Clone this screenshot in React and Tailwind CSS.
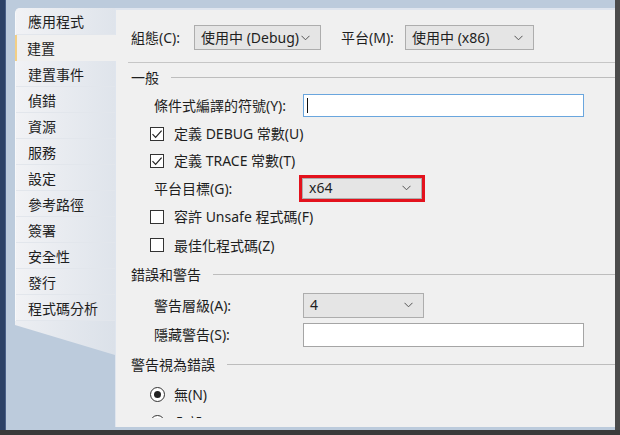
import React from 'react'

const FONT = { fontFamily: '"Noto Sans", "Noto Sans CJK TC", sans-serif' }

const tabs = ['應用程式', '建置', '建置事件', '偵錯', '資源', '服務', '設定', '參考路徑', '簽署', '安全性', '發行', '程式碼分析']

function Chevron() {
  return (
    <svg width="9" height="6" viewBox="0 0 9 6" className="shrink-0">
      <path d="M0.5 0.8 L4.5 4.8 L8.5 0.8" fill="none" stroke="#555" strokeWidth="1" />
    </svg>
  )
}

function Select({ value, className = '' }) {
  return (
    <div className={`flex items-center justify-between bg-[#e5e5e5] border border-[#adadad] pl-[6px] pr-[10px] ${className}`}>
      <span className="leading-none">{value}</span>
      <Chevron />
    </div>
  )
}

function Check({ checked }) {
  return (
    <div className="w-[14px] h-[14px] border border-[#333] bg-white flex items-center justify-center shrink-0">
      {checked && (
        <svg width="12" height="12" viewBox="0 0 12 12">
          <path d="M1.5 6.2 L4.6 9.3 L10.6 2.6" fill="none" stroke="#222" strokeWidth="1.2" />
        </svg>
      )}
    </div>
  )
}

function Radio({ checked }) {
  return (
    <div className="w-[15px] h-[15px] rounded-full border border-[#333] bg-white flex items-center justify-center shrink-0">
      {checked && <div className="w-[7px] h-[7px] rounded-full bg-[#222]" />}
    </div>
  )
}

function Header({ text, h }) {
  return (
    <div className={`flex items-center shrink-0 pl-[15px] ${h}`}>
      <span className="whitespace-nowrap">{text}</span>
      <div className="flex-1 h-px bg-[#bdbdbd] ml-[12px]" />
    </div>
  )
}

function CheckRow({ text, checked, h }) {
  return (
    <div className={`flex items-center shrink-0 pl-[34px] ${h}`}>
      <Check checked={checked} />
      <span className="ml-[10px] whitespace-nowrap">{text}</span>
    </div>
  )
}

function FieldRow({ label, h, children }) {
  return (
    <div className={`flex items-center shrink-0 pl-[38px] ${h}`}>
      <span className="w-[149px] whitespace-nowrap">{label}</span>
      {children}
    </div>
  )
}

export default function App() {
  return (
    <div className="w-[620px] h-[435px] flex flex-col bg-[#3d3d3d] text-[14px] text-[#1e1e1e] overflow-hidden" style={FONT}>
      <div className="flex h-[430px] shrink-0">
        {/* desktop strip */}
        <div className="w-[6px] bg-[#2c4166] border-r border-[#4a6088]" />

        {/* window */}
        <div className="w-[609px] bg-[#bccbdc] flex pl-[9px]">
          {/* tabs */}
          <div className="w-[100px] flex flex-col pt-[8px]">
            {tabs.map((t, i) =>
              t === '建置' ? (
                <div key={t} className="h-[26px] shrink-0 flex items-center pl-[10px] bg-[#f0f0f0] border-l-2 border-[#f2cf86] relative z-10 -mr-px">
                  {t}
                </div>
              ) : (
                <div
                  key={t}
                  className={`${i === 0 ? 'h-[27px] rounded-tl-[5px]' : 'h-[26px]'} shrink-0 flex items-center pl-[12px] bg-gradient-to-r from-[#f1f2f5] to-[#dfe4eb] border-l border-[#f7f8fa] shadow-[inset_0_-1px_0_#e2e6ec]`}
                >
                  {t}
                </div>
              )
            )}
            <div className="h-[34px] shrink-0 bg-gradient-to-r from-[#eceef2] to-[#dbe1e9] [clip-path:polygon(0_0,100%_0,100%_100%,0_12%)]" />
          </div>

          {/* property page */}
          <div className="w-[500px] mt-[8px] h-[419px] border-t-2 border-[#dfe5ee] bg-[#f0f0f0] border-l border-[#d3dae4] flex flex-col">
            {/* configuration bar */}
            <div className="h-[52px] shrink-0 flex items-start pt-[15px] pl-[15px]">
              <div className="h-[25px] flex items-center w-[63px] whitespace-nowrap">組態(C):</div>
              <Select value="使用中 (Debug)" className="w-[127px] h-[25px]" />
              <div className="h-[25px] flex items-center w-[64px] ml-[20px] whitespace-nowrap">平台(M):</div>
              <Select value="使用中 (x86)" className="w-[129px] h-[25px]" />
            </div>
            <div className="ml-[12px] h-px shrink-0 bg-[#c6c6c6]" />

            {/* scrolling content */}
            <div className="h-[355px] shrink-0 overflow-hidden flex flex-col">
              <Header text="一般" h="h-[28px]" />
              <FieldRow label="條件式編譯的符號(Y):" h="h-[29px]">
                <div className="w-[281px] h-[23px] bg-white border border-[#6aa6de] flex items-center pl-[3px]">
                  <div className="w-px h-[15px] bg-[#111]" />
                </div>
              </FieldRow>
              <CheckRow text="定義 DEBUG 常數(U)" checked h="h-[27px]" />
              <CheckRow text="定義 TRACE 常數(T)" checked h="h-[27px]" />
              <FieldRow label="平台目標(G):" h="h-[28px]">
                <div className="-ml-[4px] w-[126px] h-[27px] border-[3px] border-[#e3121d]">
                  <Select value="x64" className="w-full h-full" />
                </div>
              </FieldRow>
              <CheckRow text="容許 Unsafe 程式碼(F)" h="h-[29px]" />
              <CheckRow text="最佳化程式碼(Z)" h="h-[28px]" />
              <Header text="錯誤和警告" h="h-[31px]" />
              <FieldRow label="警告層級(A):" h="h-[30px]">
                <Select value="4" className="w-[121px] h-[25px]" />
              </FieldRow>
              <FieldRow label="隱藏警告(S):" h="h-[29px]">
                <div className="w-[281px] h-[24px] bg-white border border-[#a5a5a5]" />
              </FieldRow>
              <Header text="警告視為錯誤" h="h-[31px]" />
              <div className="h-[28px] shrink-0 flex items-center pl-[34px]">
                <Radio checked />
                <span className="ml-[9px]">無(N)</span>
              </div>
              <div className="h-[28px] shrink-0 flex items-center pl-[34px]">
                <Radio />
                <span className="ml-[9px]">全部(L)</span>
              </div>
            </div>
          </div>
        </div>

        {/* shadow right */}
        <div className="w-[5px] bg-[#4b4b4b]" />
      </div>
      <div className="h-[5px] shrink-0 bg-[#3a3a3a]" />
    </div>
  )
}
